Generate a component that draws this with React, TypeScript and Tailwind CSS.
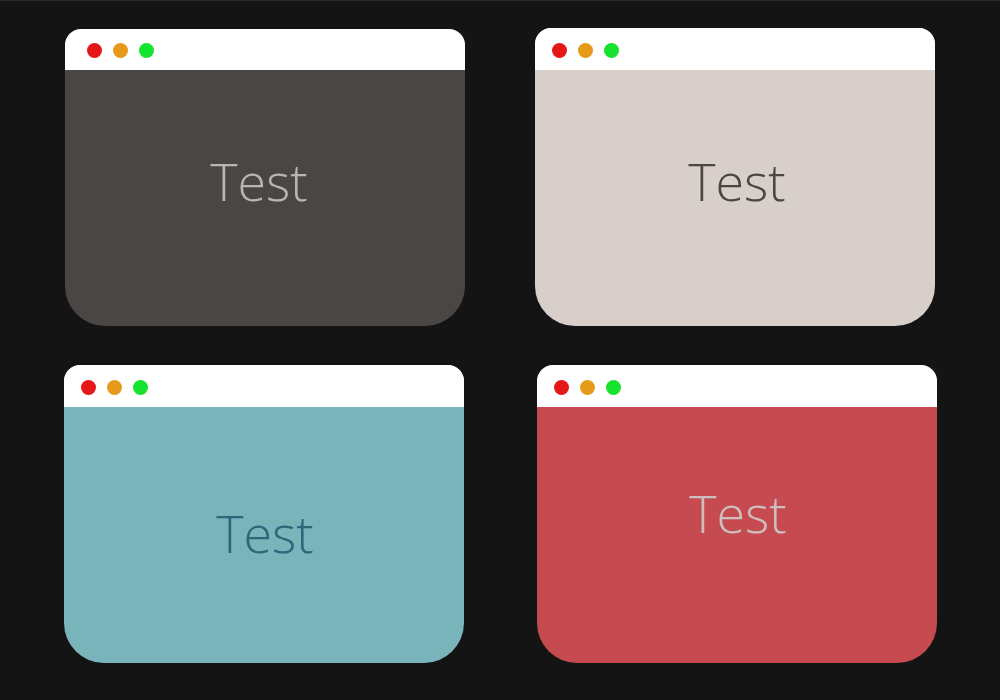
import React from "react";

type CardProps = {
  body: string;
  text: string;
  className?: string;
  headerClass: string;
  dotsClass: string;
  textClass: string;
};

function Card({ body, text, className = "", headerClass, dotsClass, textClass }: CardProps) {
  return (
    <div
      className={`w-[400px] flex flex-col overflow-hidden rounded-t-[16px] rounded-b-[40px] ${body} ${className}`}
    >
      <div className={`bg-white flex items-center pt-[2px] ${headerClass} ${dotsClass}`}>
        <div className="flex gap-[11px]">
          <span className="w-[15px] h-[15px] rounded-full bg-[#e61717]" />
          <span className="w-[15px] h-[15px] rounded-full bg-[#e69a1a]" />
          <span className="w-[15px] h-[15px] rounded-full bg-[#16e32d]" />
        </div>
      </div>
      <div className="flex-1 flex items-center justify-center">
        <span
          className={`text-[52px] leading-none font-light ${text} ${textClass}`}
          style={{ fontFamily: '"Open Sans", "Noto Sans", sans-serif' }}
        >
          Test
        </span>
      </div>
    </div>
  );
}

export default function App() {
  return (
    <div className="w-[1000px] h-[700px] bg-[#141414] border-t border-[#2a2a2a] overflow-hidden">
      <div className="grid grid-cols-[400px_400px] gap-x-[70px] gap-y-[39px] pl-[65px] pt-[27px]">
        <Card
          body="bg-[#4a4644]"
          text="text-[#b8b5b2]"
          className="h-[297px] mt-[1px]"
          headerClass="h-[41px]"
          dotsClass="pl-[22px]"
          textClass="mb-[34px] mr-[12px]"
        />
        <Card
          body="bg-[#d9cfca]"
          text="text-[#4a4644]"
          className="h-[298px]"
          headerClass="h-[42px]"
          dotsClass="pl-[17px]"
          textClass="mb-[34px] ml-[4px]"
        />
        <Card
          body="bg-[#79b4bb]"
          text="text-[#2f6479]"
          className="h-[298px] ml-[-1px]"
          headerClass="h-[42px]"
          dotsClass="pl-[17px]"
          textClass="mb-[4px] ml-[2px]"
        />
        <Card
          body="bg-[#c64b50]"
          text="text-[#cdbfbd]"
          className="h-[298px] ml-[2px]"
          headerClass="h-[42px]"
          dotsClass="pl-[17px]"
          textClass="mb-[44px] ml-[2px]"
        />
      </div>
    </div>
  );
}
